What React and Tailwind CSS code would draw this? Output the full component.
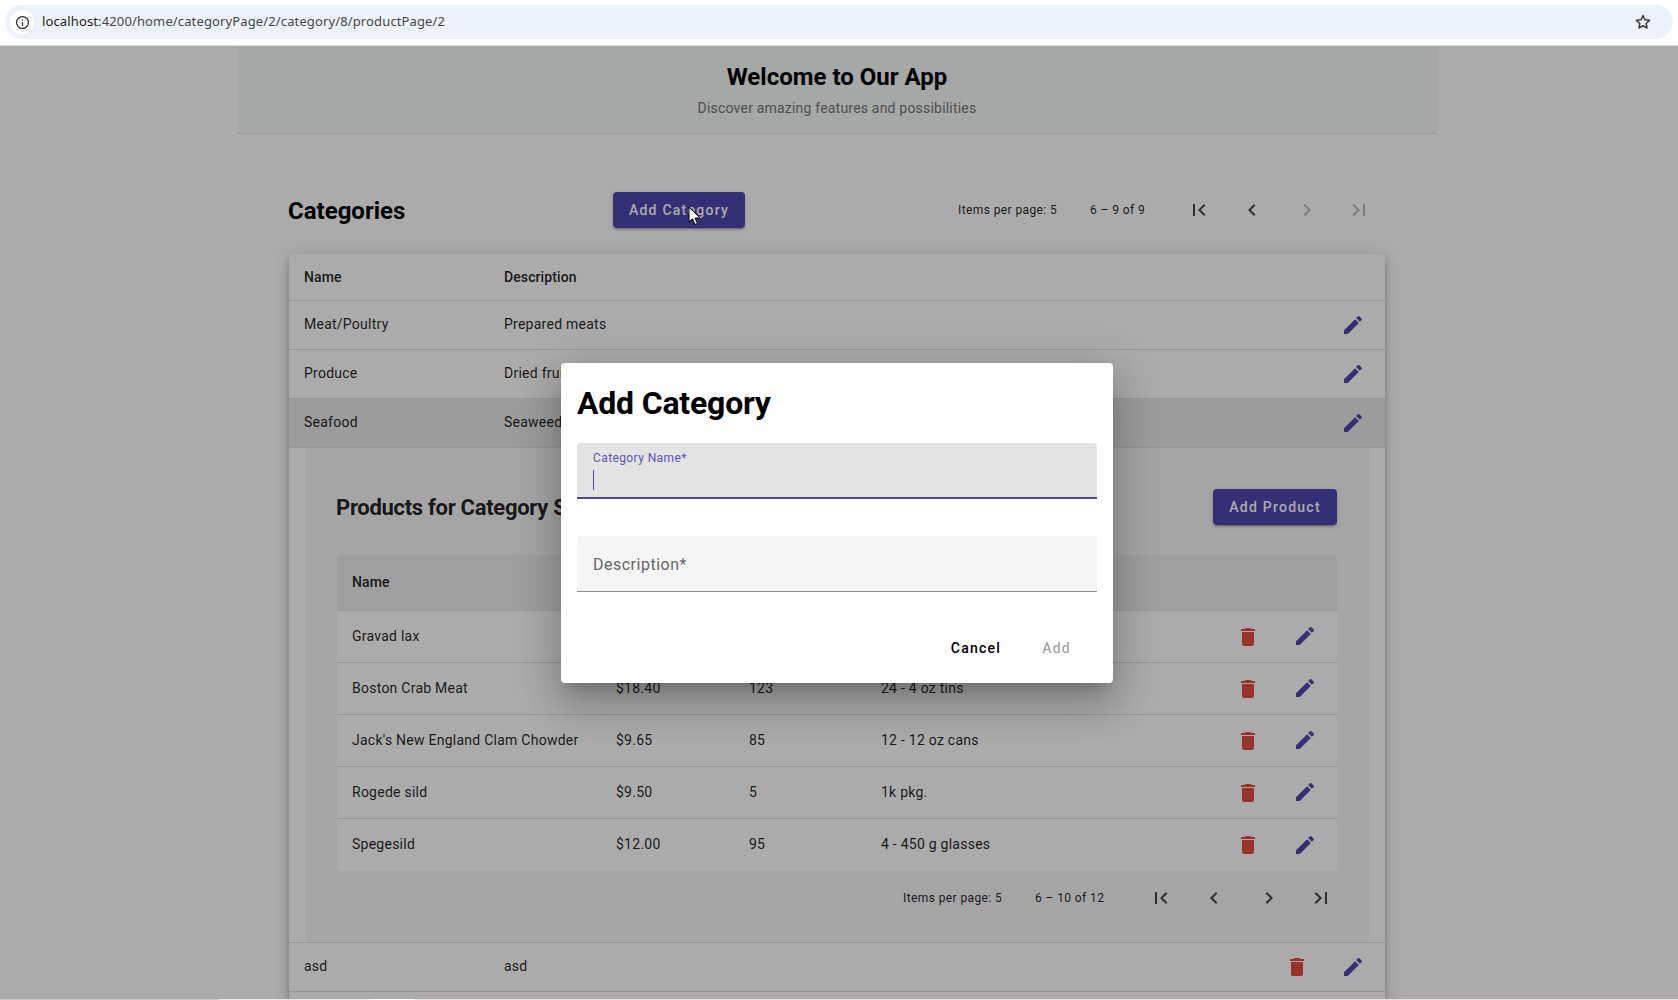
import React from "react";

const Pencil = ({ size = 24 }) => (
  <svg width={size} height={size} viewBox="0 0 24 24" fill="#4f46b0" className="block">
    <path d="M3 17.25V21h3.75L17.81 9.94l-3.75-3.75L3 17.25zM20.71 7.04a.996.996 0 0 0 0-1.41l-2.34-2.34a.996.996 0 0 0-1.41 0l-1.83 1.83 3.75 3.75 1.83-1.83z" />
  </svg>
);
const Trash = () => (
  <svg width="24" height="24" viewBox="0 0 24 24" fill="#e14c40" className="block">
    <path d="M6 19c0 1.1.9 2 2 2h8c1.1 0 2-.9 2-2V7H6v12zM19 4h-3.5l-1-1h-5l-1 1H5v2h14V4z" />
  </svg>
);
const First = () => <path d="M18.41 16.59L13.82 12l4.59-4.59L17 6l-6 6 6 6zM6 6h2v12H6z" />;
const Prev = () => <path d="M15.41 7.41L14 6l-6 6 6 6 1.41-1.41L10.83 12z" />;
const Next = () => <path d="M10 6L8.59 7.41 13.17 12l-4.58 4.59L10 18l6-6z" />;
const Last = () => <path d="M5.59 7.41L10.18 12l-4.59 4.59L7 18l6-6-6-6zM16 6h2v12h-2z" />;

const PageIcon = ({ disabled, w, children }) => (
  <div className={`${w} shrink-0 flex justify-center`}>
    <svg width="24" height="24" viewBox="0 0 24 24" fill={disabled ? "rgba(0,0,0,0.26)" : "rgba(0,0,0,0.72)"}>
      {children}
    </svg>
  </div>
);

const Paginator = ({ range, nextDisabled, rangeW }) => (
  <div className="flex items-center text-[12px] tracking-[0.4px] text-black/87">
    <span className="w-[132px] shrink-0">Items per page: 5</span>
    <span className={`${rangeW} shrink-0`}>{range}</span>
    <PageIcon w="w-[52px]"><First /></PageIcon>
    <PageIcon w="w-[54px]"><Prev /></PageIcon>
    <PageIcon w="w-[56px]" disabled={nextDisabled}><Next /></PageIcon>
    <PageIcon w="w-[48px]" disabled={nextDisabled}><Last /></PageIcon>
  </div>
);

const CategoryRow = ({ name, desc, selected, trash }) => (
  <div className={`h-[49px] flex items-center border-b border-[#e0e0e0] pl-[15px] pr-[20px] text-[14px] tracking-[0.25px] text-black/87 ${selected ? "bg-[#e9e9e9]" : ""}`}>
    <span className="w-[200px] pb-px">{name}</span>
    <span className="flex-1 pb-px">{desc}</span>
    {trash && <div className="mr-[32px]"><Trash /></div>}
    <Pencil />
  </div>
);

const products = [
  ["Gravad lax", "", "", ""],
  ["Boston Crab Meat", "$18.40", "123", "24 - 4 oz tins"],
  ["Jack's New England Clam Chowder", "$9.65", "85", "12 - 12 oz cans"],
  ["Rogede sild", "$9.50", "5", "1k pkg."],
  ["Spegesild", "$12.00", "95", "4 - 450 g glasses"],
];

export default function App() {
  return (
    <div className="relative h-[1000px] overflow-hidden bg-white font-['Roboto',sans-serif]">
      {/* browser chrome */}
      <div className="relative z-20 h-[46px] bg-white border-b border-[#dcdcdc] px-[5px] pt-[5px]">
        <div className="h-[34px] rounded-full bg-[#edf1fa] flex items-center pl-[5px] pr-[21px] font-['Noto_Sans','Open_Sans',sans-serif] text-[13px] tracking-[0.13px]">
          <div className="w-[24px] h-[24px] rounded-full bg-white flex items-center justify-center">
            <svg width="15" height="15" viewBox="0 0 24 24" fill="none" stroke="#2c2c2c" strokeWidth="2">
              <circle cx="12" cy="12" r="9.5" />
              <path d="M12 11v6M12 7v2" />
            </svg>
          </div>
          <span className="ml-[8px] text-[#1f1f1f]">localhost<span className="text-[#474747]">:4200/home/categoryPage/2/category/8/productPage/2</span></span>
          <svg className="ml-auto" width="18" height="18" viewBox="0 0 24 24" fill="none" stroke="#3c3c3c" strokeWidth="2" strokeLinejoin="round">
            <path d="M12 3.5l2.6 5.6 6.1.7-4.5 4.2 1.2 6L12 17l-5.4 3 1.2-6-4.5-4.2 6.1-.7z" />
          </svg>
        </div>
      </div>

      {/* page */}
      <div className="w-[1200px] ml-[237px] h-[88px] bg-[#f8f9fa] border-b border-[#e4e4e4] flex flex-col items-center">
        <h1 className="mt-[15px] text-[24px] leading-[32px] font-bold text-black">Welcome to Our App</h1>
        <p className="mt-[5px] text-[14px] leading-[20px] tracking-[0.2px] text-[#757575]">Discover amazing features and possibilities</p>
      </div>

      <div className="w-[1096px] ml-[289px] mt-[52px]">
        <div className="h-[48px] flex items-center">
          <h2 className="w-[325px] -ml-px mt-[2px] shrink-0 text-[24px] font-bold text-black">Categories</h2>
          <button className="h-[36px] w-[132px] shrink-0 rounded-[4px] bg-[#4f46b0] text-white text-[14px] font-medium tracking-[1.25px] shadow-[0_3px_1px_-2px_rgba(0,0,0,.2),0_2px_2px_0_rgba(0,0,0,.14),0_1px_5px_0_rgba(0,0,0,.12)]">Add Category</button>
          <div className="ml-[213px] shrink-0">
            <Paginator range="6 – 9 of 9" nextDisabled rangeW="w-[83px]" />
          </div>
        </div>

        <div className="mt-[20px] rounded-[4px] bg-white shadow-[0_3px_5px_-1px_rgba(0,0,0,.2),0_6px_10px_0_rgba(0,0,0,.14),0_1px_18px_0_rgba(0,0,0,.12)]">
          <div className="h-[47px] flex items-center border-b border-[#e0e0e0] pl-[15px] text-[14px] font-medium tracking-[0.1px] text-black/87">
            <span className="w-[200px]">Name</span>
            <span>Description</span>
          </div>
          <CategoryRow name="Meat/Poultry" desc="Prepared meats" />
          <CategoryRow name="Produce" desc="Dried fruit and bean curd" />
          <CategoryRow name="Seafood" desc="Seaweed and fish" selected />

          {/* expanded detail */}
          <div className="border-b border-[#e0e0e0] px-[16px]">
            <div className="h-[494px] bg-[#f6f6f6] rounded-b-[4px] pl-[32px] pr-[32px]">
              <div className="h-[107px] flex items-center pt-[9px]">
                <h3 className="mt-[2px] -ml-px text-[22px] font-bold text-black/87 tracking-[-0.3px]">Products for Category Seafood</h3>
                <button className="ml-auto mt-[2px] h-[36px] w-[124px] shrink-0 rounded-[4px] bg-[#4f46b0] text-white text-[14px] font-medium tracking-[1.25px] shadow-[0_3px_1px_-2px_rgba(0,0,0,.2),0_2px_2px_0_rgba(0,0,0,.14),0_1px_5px_0_rgba(0,0,0,.12)]">Add Product</button>
              </div>
              <div className="bg-white rounded-[4px]">
                <div className="h-[56px] flex items-center rounded-t-[4px] bg-[#ededed] border-b border-[#e0e0e0] pl-[15px] pb-px text-[14px] font-medium tracking-[0.1px] text-black/87">
                  Name
                </div>
                {products.map((p) => (
                  <div key={p[0]} className="h-[52px] flex items-center border-b last:border-b-0 border-[#e0e0e0] pl-[15px] text-[14px] tracking-[0.25px] text-black/87">
                    <span className="w-[264px] pb-px">{p[0]}</span>
                    <span className="w-[133px] pb-px">{p[1]}</span>
                    <span className="w-[132px] pb-px">{p[2]}</span>
                    <span className="flex-1 pb-px">{p[3]}</span>
                    <div className="mr-[33px]"><Trash /></div>
                    <div className="mr-[20px] pb-px"><Pencil /></div>
                  </div>
                ))}
              </div>
              <div className="h-[56px] flex justify-end items-center pb-[2px] -mr-[8px]">
                <Paginator range="6 – 10 of 12" rangeW="w-[100px]" />
              </div>
            </div>
          </div>
          <CategoryRow name="asd" desc="asd" trash />
          <div className="h-[49px]" />
        </div>
      </div>

      {/* backdrop and dialog */}
      <div className="absolute inset-x-0 top-[46px] bottom-0 z-10 bg-black/33" />
      <div className="absolute z-10 left-[561px] top-[363px] w-[552px] h-[320px] rounded-[4px] bg-white px-[16px] shadow-[0_11px_15px_-7px_rgba(0,0,0,.2),0_24px_38px_3px_rgba(0,0,0,.14),0_9px_46px_8px_rgba(0,0,0,.12)]">
        <h2 className="mt-[15px] h-[50px] text-[32px] leading-[50px] font-bold text-black tracking-[-0.2px]">Add Category</h2>
        <div className="mt-[15px] h-[56px] rounded-t-[4px] bg-[#e3e3e3] border-b-2 border-[#4f46b0] px-4 pt-[7px]">
          <div className="text-[12px] leading-[16px] text-[#5d54bd] tracking-[0.4px]">Category Name*</div>
          <div className="mt-[4px] w-px h-[20px] bg-[#4f46b0]" />
        </div>
        <div className="mt-[37px] h-[56px] rounded-t-[4px] bg-[#f5f5f5] border-b border-[#8a8a8a] px-4 pt-[3px] flex items-center">
          <span className="text-[16px] text-[#666666] tracking-[0.5px]">Description*</span>
        </div>
        <div className="mt-[46px] flex justify-end items-center text-[14px] font-medium tracking-[1.25px] pr-[26px]">
          <span className="text-black">Cancel</span>
          <span className="ml-[41px] text-black/38">Add</span>
        </div>
      </div>

      {/* mouse cursor */}
      <svg className="absolute z-10 left-[688px] top-[206px]" width="13" height="20" viewBox="0 0 13 20">
        <path d="M1 1v15l3.5-3.2L7 18.5l2.5-1.1L7 12h5z" fill="#fff" stroke="#000" strokeWidth="1" />
      </svg>

      {/* sliver of the desktop below the window */}
      <div className="absolute z-20 inset-x-0 bottom-0 h-px flex">
        <div className="w-[219px] bg-[#c4c4c4]" />
        <div className="w-[150px] bg-[#e8e8e8]" />
        <div className="w-[46px] bg-white" />
        <div className="flex-1 bg-[#d9e7e3]" />
      </div>
    </div>
  );
}
